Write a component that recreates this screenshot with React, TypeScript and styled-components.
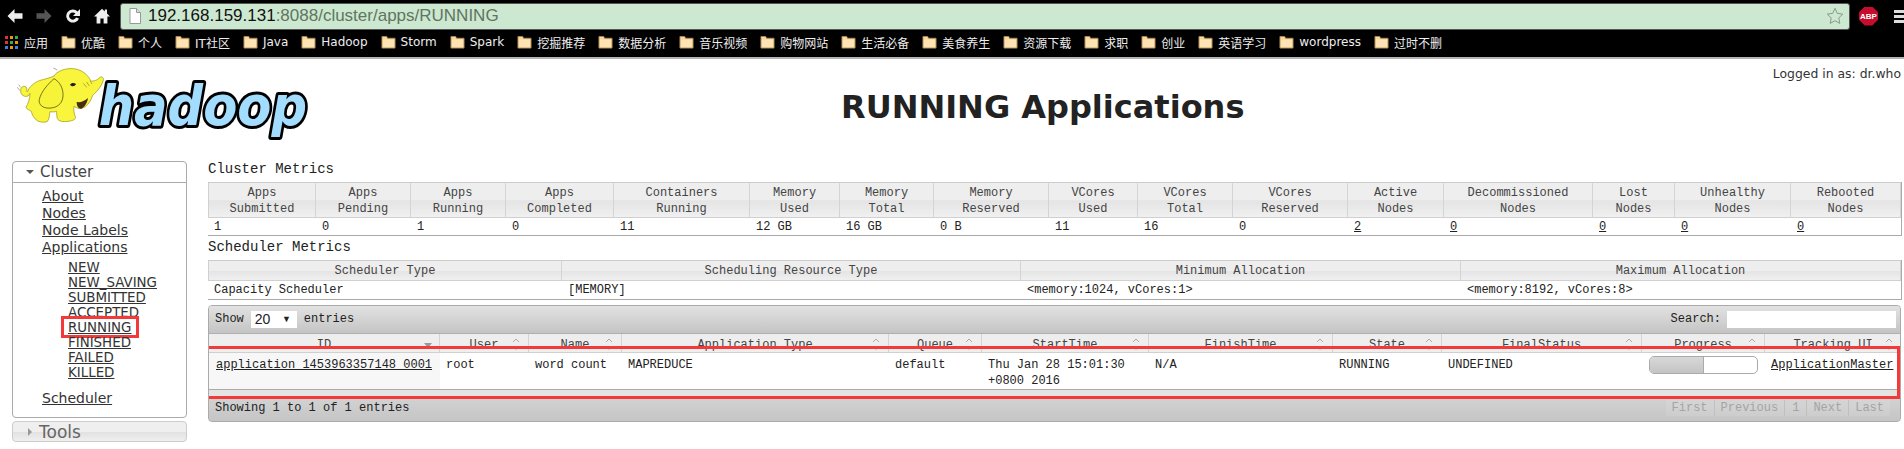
import React from 'react'
import styled, { createGlobalStyle } from 'styled-components'

const mono = '"Liberation Mono", "Noto Sans CJK SC", monospace'
const sans = '"DejaVu Sans", "Noto Sans CJK SC", sans-serif'

const GlobalStyle = createGlobalStyle`
  html, body {
    margin: 0;
    padding: 0;
    background: #fff;
    overflow: hidden;
  }
  * {
    box-sizing: border-box;
  }
`

const bookmarks = [
  '优酷', '个人', 'IT社区', 'Java', 'Hadoop', 'Storm', 'Spark', '挖掘推荐', '数据分析', '音乐视频',
  '购物网站', '生活必备', '美食养生', '资源下载', '求职', '创业', '英语学习', 'wordpress', '过时不删',
]
const clusterCols = [108, 95, 95, 108, 136, 90, 94, 115, 89, 95, 115, 96, 149, 82, 116, 110]
const clusterHead = [
  ['Apps', 'Submitted'], ['Apps', 'Pending'], ['Apps', 'Running'], ['Apps', 'Completed'],
  ['Containers', 'Running'], ['Memory', 'Used'], ['Memory', 'Total'], ['Memory', 'Reserved'],
  ['VCores', 'Used'], ['VCores', 'Total'], ['VCores', 'Reserved'], ['Active', 'Nodes'],
  ['Decommissioned', 'Nodes'], ['Lost', 'Nodes'], ['Unhealthy', 'Nodes'], ['Rebooted', 'Nodes'],
]
const clusterData = ['1', '0', '1', '0', '11', '12 GB', '16 GB', '0 B', '11', '16', '0']
const nodeLinks = ['2', '0', '0', '0', '0']
const schedulerCols = [354, 459, 440, 440]
const appCols = [231, 89, 93, 267, 93, 167, 184, 109, 200, 123, 137]
const appHead = ['ID', 'User', 'Name', 'Application Type', 'Queue', 'StartTime', 'FinishTime', 'State', 'FinalStatus', 'Progress', 'Tracking UI']
const subLinks = ['NEW', 'NEW_SAVING', 'SUBMITTED', 'ACCEPTED', 'RUNNING', 'FINISHED', 'FAILED', 'KILLED']
const pages = ['First', 'Previous', '1', 'Next', 'Last']

export default function App() {
  return (
    <Page>
      <GlobalStyle />
      <Toolbar>
        <NavIcons>
          <NavIcon viewBox="0 0 16 16" $dim={false}><path d="M0.5 8l7-7v4.2h8v5.6h-8V15z" /></NavIcon>
          <NavIcon viewBox="0 0 16 16" $dim><path d="M15.5 8l-7-7v4.2h-8v5.6h8V15z" /></NavIcon>
          <NavIcon viewBox="0 0 16 16" $dim={false}>
            <path d="M14 10.4A6.6 6.6 0 1 1 12.6 3.4L15 1v7H8l2.4-2.4a3.6 3.6 0 1 0 .6 4z" />
          </NavIcon>
          <NavIcon viewBox="0 0 16 16" $dim={false}>
            <path d="M8 .8L0 8.4h2.6V15.5h3.8v-5h3.2v5h3.8V8.4H16L13 5.6V1.6h-2.2v1.9z" />
          </NavIcon>
        </NavIcons>
        <AddressBar>
          <PageIcon viewBox="0 0 12 16">
            <path d="M1 .5h6.5L11.5 4.5v11H1z" fill="#fff" stroke="#999" />
            <path d="M7.5.5v4h4" fill="#ddd" stroke="#999" />
          </PageIcon>
          <Url>
            192.168.159.131<UrlRest>:8088/cluster/apps/RUNNING</UrlRest>
          </Url>
          <StarIcon viewBox="0 0 20 20">
            <path d="M10 1.5l2.6 5.6 6 .8-4.4 4.2 1.1 6.1L10 15.2l-5.3 3 1.1-6.1L1.4 7.9l6-.8z" />
          </StarIcon>
        </AddressBar>
        <AbpBadge>ABP</AbpBadge>
        <MenuBars>
          <span />
          <span />
          <span />
        </MenuBars>
      </Toolbar>

      <BookmarkBar>
        <AppsItem>
          <AppsGrid>
            {['#d33', '#e90', '#3a5', '#d33', '#3a5', '#e90', '#38d', '#e90', '#38d'].map((c, i) => (
              <AppsDot key={i} $color={c} />
            ))}
          </AppsGrid>
          应用
        </AppsItem>
        {bookmarks.map((b) => (
          <Bookmark key={b}>
            <FolderIcon viewBox="0 0 16 15">
              <path d="M1 3.5V1.6h5l1 1.9h8V14H1z" fill="#fdd699" stroke="#a98b5c" />
              <path d="M2 5h12v8H2z" fill="#fee3b4" />
            </FolderIcon>
            {b}
          </Bookmark>
        ))}
      </BookmarkBar>

      <Header>
        <LogoSvg viewBox="0 12 960 255">
          <text
            x="296"
            y="210"
            fontFamily="DejaVu Sans"
            fontWeight="bold"
            fontStyle="italic"
            fontSize="165"
            textLength="625"
            lengthAdjust="spacingAndGlyphs"
            fill="#a2dcff"
            stroke="#000"
            strokeWidth="18"
            strokeLinejoin="round"
            paintOrder="stroke"
          >
            hadoop
          </text>
          <g transform="translate(38 15)">
            <path d="M14 82l8 10M18 74l6 8M122 24l12 6" stroke="#999" strokeWidth="2.5" fill="none" />
            <path
              d="M46 108c-10 4-22-2-22-16-1-12 12-18 18-8 2 5-2 8 2 12 6-16 20-28 36-34 16-5 32-8 44-14 8-14 34-24 58-22 24 2 44 18 52 36 8 4 20-2 28-10 6-4 12 2 10 8-4 16-16 32-32 46-4 14-12 26-22 34-12 8-26 6-34-2-2 12 0 22 4 32 2 8-6 12-22 14-14 2-28 0-32-8-2-8-2-14-2-22-6 2-14 2-20 1-2 10-2 20-6 27-6 6-20 6-32 0-10-6-16-18-18-28-6-4-14-6-16-12 6-10 12-26 12-42z"
              fill="#f8f53c"
              stroke="#a8a428"
              strokeWidth="2.5"
            />
            <path
              d="M124 56c-18 16-38 38-44 62-3 12 6 24 22 26 18 2 36-4 44-18 8-14 6-36-2-50-4-8-12-16-20-20z"
              fill="#f6f338"
              stroke="#5c5a14"
              strokeWidth="2.5"
            />
            <path d="M172 74c4-6 12-7 18-2-4 8-12 9-18 2z" fill="#222" />
            <path d="M192 126c10 2 24-2 34-12-2 14-10 28-20 32-8 2-14-8-14-20z" fill="#4a2e10" />
            <path d="M212 70l10 12M222 66l8 12M232 62l6 10" stroke="#8c8818" strokeWidth="2" fill="none" />
          </g>
        </LogoSvg>
        <Title>RUNNING Applications</Title>
        <Logged>Logged in as: dr.who</Logged>
      </Header>

      <Content>
        <Sidebar>
          <NavBox>
            <NavHead>
              <CaretDown />
              Cluster
            </NavHead>
            <NavBody>
              <NavLink>About</NavLink>
              <NavLink>Nodes</NavLink>
              <NavLink>Node Labels</NavLink>
              <NavLink>Applications</NavLink>
              <SubList>
                {subLinks.map((s) => (
                  <SubLink key={s}>
                    {s}
                    {s === 'RUNNING' && <RunningMark />}
                  </SubLink>
                ))}
              </SubList>
              <NavLink>Scheduler</NavLink>
            </NavBody>
          </NavBox>
          <ToolsHead>
            <CaretRight />
            Tools
          </ToolsHead>
        </Sidebar>

        <Main>
          <MetricTitle>Cluster Metrics</MetricTitle>
          <MetricTable>
            <colgroup>
              {clusterCols.map((w, i) => (
                <Col key={i} $w={w} />
              ))}
            </colgroup>
            <thead>
              <tr>
                {clusterHead.map(([a, b], i) => (
                  <MetricTh key={i}>
                    {a}
                    <br />
                    {b}
                  </MetricTh>
                ))}
              </tr>
            </thead>
            <tbody>
              <tr>
                {clusterData.map((d, i) => (
                  <MetricTd key={i} $h={18}>{d}</MetricTd>
                ))}
                {nodeLinks.map((d, i) => (
                  <MetricTd key={i} $h={18}>
                    <TextLink>{d}</TextLink>
                  </MetricTd>
                ))}
              </tr>
            </tbody>
          </MetricTable>

          <SecondTitle>Scheduler Metrics</SecondTitle>
          <MetricTable>
            <colgroup>
              {schedulerCols.map((w, i) => (
                <Col key={i} $w={w} />
              ))}
            </colgroup>
            <thead>
              <tr>
                {['Scheduler Type', 'Scheduling Resource Type', 'Minimum Allocation', 'Maximum Allocation'].map((h) => (
                  <MetricTh key={h}>{h}</MetricTh>
                ))}
              </tr>
            </thead>
            <tbody>
              <tr>
                {['Capacity Scheduler', '[MEMORY]', '<memory:1024, vCores:1>', '<memory:8192, vCores:8>'].map((d) => (
                  <MetricTd key={d} $h={19}>{d}</MetricTd>
                ))}
              </tr>
            </tbody>
          </MetricTable>

          <DataWrap>
            <TopBar>
              <LengthLabel>
                Show
                <FakeSelect>
                  20
                  <SelectArrow>▼</SelectArrow>
                </FakeSelect>
                entries
              </LengthLabel>
              <SearchLabel>
                Search:
                <SearchInput />
              </SearchLabel>
            </TopBar>
            <AppTable>
              <colgroup>
                {appCols.map((w, i) => (
                  <Col key={i} $w={w} />
                ))}
              </colgroup>
              <thead>
                <tr>
                  {appHead.map((h, i) => (
                    <AppTh key={h}>
                      {h}
                      {i === 0 ? (
                        <SortDesc />
                      ) : (
                        <SortBoth viewBox="0 0 8 14">
                          <path d="M1 5l3-3 3 3" />
                          <path d="M2 11l2 2 2-2z" fill="#bbb" stroke="none" />
                        </SortBoth>
                      )}
                    </AppTh>
                  ))}
                </tr>
              </thead>
              <tbody>
                <tr>
                  <SortedTd>
                    <TextLink>application_1453963357148_0001</TextLink>
                  </SortedTd>
                  <AppTd>root</AppTd>
                  <AppTd>word count</AppTd>
                  <AppTd>MAPREDUCE</AppTd>
                  <AppTd>default</AppTd>
                  <AppTd>Thu Jan 28 15:01:30 +0800 2016</AppTd>
                  <AppTd>N/A</AppTd>
                  <AppTd>RUNNING</AppTd>
                  <AppTd>UNDEFINED</AppTd>
                  <ProgressTd>
                    <ProgressBar>
                      <ProgressFill $pct={50} />
                    </ProgressBar>
                  </ProgressTd>
                  <TrackTd>
                    <TextLink>ApplicationMaster</TextLink>
                  </TrackTd>
                </tr>
              </tbody>
            </AppTable>
            <RowBand />
            <BottomBar>
              <span>Showing 1 to 1 of 1 entries</span>
              <Pager>
                {pages.map((p) => (
                  <PageBtn key={p} $narrow={p === '1'}>
                    {p}
                  </PageBtn>
                ))}
              </Pager>
            </BottomBar>
            <RowMark />
          </DataWrap>
        </Main>
      </Content>
    </Page>
  )
}

const Page = styled.div`
  width: 1904px;
  height: 449px;
  overflow: hidden;
  background: #fff;
  color: #222;
`
const Toolbar = styled.div`
  display: flex;
  align-items: center;
  height: 29px;
  padding-top: 3px;
  background: #000;
`
const NavIcons = styled.div`
  display: flex;
  align-items: center;
  gap: 13px;
  width: 120px;
  padding-left: 7px;
`
const NavIcon = styled.svg<{ $dim: boolean }>`
  width: 16px;
  height: 16px;
  fill: ${({ $dim }) => ($dim ? '#555' : '#eee')};
`
const AddressBar = styled.div`
  display: flex;
  align-items: center;
  width: 1730px;
  height: 27px;
  padding: 0 5px 0 8px;
  background: #cde8d0;
  border: 1px solid #555;
  border-radius: 3px;
`
const PageIcon = styled.svg`
  width: 12px;
  height: 16px;
  flex: none;
`
const Url = styled.div`
  flex: 1;
  margin-left: 7px;
  font: 17px 'Liberation Sans', sans-serif;
  color: #111;
`
const UrlRest = styled.span`
  color: #5f7560;
`
const StarIcon = styled.svg`
  width: 18px;
  height: 18px;
  fill: none;
  stroke: #7f9280;
`
const AbpBadge = styled.div`
  display: flex;
  align-items: center;
  justify-content: center;
  flex: none;
  width: 19px;
  height: 19px;
  margin-left: 9px;
  background: #c70d2c;
  clip-path: polygon(30% 0, 70% 0, 100% 30%, 100% 70%, 70% 100%, 30% 100%, 0 70%, 0 30%);
  font: bold 8px 'Liberation Sans', sans-serif;
  color: #fff;
`
const MenuBars = styled.div`
  display: flex;
  flex-direction: column;
  gap: 2px;
  flex: none;
  width: 10px;
  margin-left: 16px;
  span {
    height: 3px;
    background: #ddd;
  }
`
const BookmarkBar = styled.div`
  display: flex;
  align-items: center;
  gap: 13px;
  height: 30px;
  padding: 0 0 2px 5px;
  background: #000;
  border-bottom: 2px solid #b4b4b4;
  font: 12px ${sans};
  color: #eee;
`
const AppsItem = styled.div`
  display: flex;
  align-items: center;
  gap: 6px;
`
const AppsGrid = styled.div`
  display: grid;
  grid-template-columns: repeat(3, 3px);
  gap: 2px;
`
const AppsDot = styled.span<{ $color: string }>`
  width: 3px;
  height: 3px;
  background: ${({ $color }) => $color};
`
const Bookmark = styled.div`
  display: flex;
  align-items: center;
  gap: 5px;
  white-space: nowrap;
`
const FolderIcon = styled.svg`
  width: 15px;
  height: 14px;
  flex: none;
`
const Header = styled.header`
  display: grid;
  grid-template-columns: 841px 403px 1fr;
  height: 102px;
`
const LogoSvg = styled.svg`
  width: 320px;
  height: 85px;
  overflow: visible;
`
const Title = styled.h1`
  margin: 29px 0 0;
  font: bold 32px/38px ${sans};
  color: #222;
  white-space: nowrap;
`
const Logged = styled.div`
  justify-self: end;
  margin: 7px 3px 0 0;
  font: 12.4px/15px ${sans};
  color: #333;
`
const Content = styled.div`
  display: flex;
`
const Sidebar = styled.aside`
  flex: none;
  display: flex;
  flex-direction: column;
  gap: 3px;
  width: 175px;
  margin: 0 21px 0 12px;
`
const NavBox = styled.div`
  height: 257px;
  border: 1px solid #aaa;
  border-radius: 4px;
`
const NavHead = styled.div`
  display: flex;
  align-items: center;
  height: 21px;
  padding-left: 13px;
  border-bottom: 1px solid #aaa;
  font: 15px ${sans};
  color: #444;
`
const CaretDown = styled.span`
  width: 0;
  height: 0;
  margin-right: 6px;
  border-left: 4px solid transparent;
  border-right: 4px solid transparent;
  border-top: 4px solid #555;
`
const CaretRight = styled.span`
  width: 0;
  height: 0;
  margin-right: 7px;
  border-top: 4px solid transparent;
  border-bottom: 4px solid transparent;
  border-left: 4px solid #999;
`
const NavBody = styled.nav`
  padding: 5px 0 0 29px;
`
const NavLink = styled.a`
  display: block;
  width: fit-content;
  font: 14px/17px ${sans};
  color: #333;
  text-decoration: underline;
`
const SubList = styled.div`
  margin: 4px 0 10px 26px;
`
const SubLink = styled.a`
  position: relative;
  display: block;
  width: fit-content;
  font: 13.4px/15px ${sans};
  color: #333;
  text-decoration: underline;
`
const RunningMark = styled.span`
  position: absolute;
  left: -7px;
  right: -8px;
  top: -4px;
  height: 22px;
  border: 3px solid #f23a3a;
`
const ToolsHead = styled.div`
  display: flex;
  align-items: center;
  height: 21px;
  padding-left: 15px;
  border: 1px solid #ccc;
  border-radius: 4px;
  background: linear-gradient(#efefef 50%, #e2e2e2 55%, #efefef);
  font: 17px ${sans};
  color: #666;
`
const Main = styled.main`
  flex: none;
  width: 1693px;
  font: 12px ${mono};
`
const MetricTitle = styled.div`
  height: 21px;
  font: 14px/17px ${mono};
  color: #222;
`
const SecondTitle = styled(MetricTitle)`
  height: 24px;
  line-height: 22px;
`
const Col = styled.col<{ $w: number }>`
  width: ${({ $w }) => $w}px;
`
const MetricTable = styled.table`
  width: 1693px;
  table-layout: fixed;
  border-collapse: separate;
  border-spacing: 0;
  border-right: 1px solid #aaa;
`
const MetricTh = styled.th`
  padding: 3px 0 0;
  font: 12px/15.5px ${mono};
  color: #444;
  background: linear-gradient(#eee 50%, #e4e4e4 52%, #f0f0f0);
  border-top: 1px solid #ccc;
  border-right: 1px solid #d4d4d4;
  border-bottom: 1px solid #d0d0d0;
  &:first-child {
    border-left: 1px solid #d0d0d0;
  }
`
const MetricTd = styled.td<{ $h: number }>`
  height: ${({ $h }) => $h}px;
  padding: 1px 0 0 6px;
  line-height: 16px;
  color: #222;
  border-bottom: 1px solid #aaa;
  white-space: nowrap;
`
const TextLink = styled.a`
  color: #222;
  text-decoration: underline;
`
const DataWrap = styled.div`
  position: relative;
  height: 117px;
  margin-top: 5px;
  border: 1px solid #aaa;
  border-radius: 4px;
  overflow: hidden;
  background: linear-gradient(#e0e0e0, #c6c6c6);
`
const TopBar = styled.div`
  display: flex;
  justify-content: space-between;
  align-items: center;
  height: 28px;
  padding: 0 4px 0 6px;
  background: linear-gradient(#e2e2e2, #c4c4c4);
  border-bottom: 1px solid #b0b0b0;
`
const LengthLabel = styled.div`
  display: flex;
  align-items: center;
  gap: 7px;
`
const FakeSelect = styled.div`
  display: flex;
  justify-content: space-between;
  align-items: center;
  width: 46px;
  height: 17px;
  padding: 0 6px 0 4px;
  background: #fff;
  font: 14px 'Liberation Sans', sans-serif;
`
const SelectArrow = styled.span`
  font-size: 9px;
`
const SearchLabel = styled.div`
  display: flex;
  align-items: center;
  gap: 6px;
`
const SearchInput = styled.div`
  width: 169px;
  height: 17px;
  background: #fff;
`
const AppTable = styled.table`
  width: 1691px;
  table-layout: fixed;
  border-collapse: separate;
  border-spacing: 0;
  background: #fff;
`
const AppTh = styled.th`
  position: relative;
  height: 19px;
  padding: 5px 0 0;
  font: 12px/13px ${mono};
  font-weight: normal;
  color: #444;
  background: #eee;
  border-right: 1px solid #d4d4d4;
  border-bottom: 1px solid #d0d0d0;
`
const SortBoth = styled.svg`
  position: absolute;
  right: 8px;
  top: 3px;
  width: 8px;
  height: 14px;
  fill: none;
  stroke: #aaa;
`
const SortDesc = styled.span`
  position: absolute;
  right: 7px;
  top: 9px;
  width: 0;
  height: 0;
  border-left: 4px solid transparent;
  border-right: 4px solid transparent;
  border-top: 5px solid #999;
`
const AppTd = styled.td`
  height: 35px;
  padding: 4px 6px 0;
  vertical-align: top;
  font: 12px/16px ${mono};
  color: #222;
`
const SortedTd = styled(AppTd)`
  padding-left: 7px;
  padding-right: 0;
  background: #f7f7f7;
  white-space: nowrap;
`
const ProgressTd = styled(AppTd)`
  padding: 3px 7px 0;
`
const TrackTd = styled(AppTd)`
  padding-left: 6px;
  padding-right: 0;
  white-space: nowrap;
`
const ProgressBar = styled.div`
  height: 18px;
  border: 1px solid #aaa;
  border-radius: 5px;
  overflow: hidden;
  background: #fff;
`
const ProgressFill = styled.div<{ $pct: number }>`
  width: ${({ $pct }) => $pct}%;
  height: 100%;
  background: linear-gradient(#d8d8d8, #c4c4c4);
  border-right: 1px solid #aaa;
`
const RowBand = styled.div`
  height: 9px;
  background: #e4e4e4;
  border-top: 1px solid #aaa;
`
const BottomBar = styled.div`
  display: flex;
  justify-content: space-between;
  height: 25px;
  padding: 2px 10px 0 6px;
  background: linear-gradient(#d2d2d2, #c4c4c4);
  line-height: 16px;
`
const Pager = styled.div`
  display: flex;
  height: 16px;
  color: #a4a4a4;
  background: rgba(255, 255, 255, 0.1);
`
const PageBtn = styled.span<{ $narrow: boolean }>`
  padding: 0 ${({ $narrow }) => ($narrow ? 7 : 6)}px;
  border-right: 1px solid #c0c0c0;
  &:last-child {
    border-right: 0;
  }
`
const RowMark = styled.div`
  position: absolute;
  left: -3px;
  right: 0;
  top: 40px;
  height: 53px;
  border: 3px solid #f23a3a;
`
